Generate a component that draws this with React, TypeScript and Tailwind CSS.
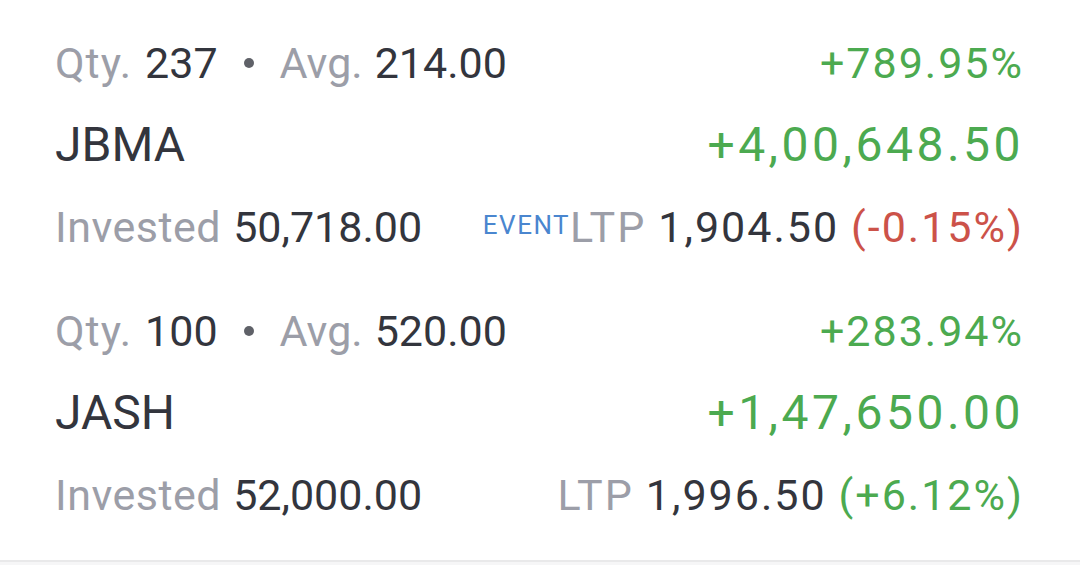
import React from "react";

type Holding = {
  qty: number;
  avg: string;
  symbol: string;
  pnl: string;
  pnlPct: string;
  invested: string;
  ltp: string;
  change: string;
  up: boolean;
  event?: boolean;
};

const holdings: Holding[] = [
  {
    qty: 237,
    avg: "214.00",
    symbol: "JBMA",
    pnl: "+4,00,648.50",
    pnlPct: "+789.95%",
    invested: "50,718.00",
    ltp: "1,904.50",
    change: "(-0.15%)",
    up: false,
    event: true,
  },
  {
    qty: 100,
    avg: "520.00",
    symbol: "JASH",
    pnl: "+1,47,650.00",
    pnlPct: "+283.94%",
    invested: "52,000.00",
    ltp: "1,996.50",
    change: "(+6.12%)",
    up: true,
  },
];

function HoldingRow({ h }: { h: Holding }) {
  return (
    <div className="flex flex-col">
      <div className="flex h-[82px] items-center justify-between text-[43px]">
        <div className="flex items-center">
          <span className="tracking-[1px] text-[#9c9ea8]">Qty.</span>
          <span className="ml-[13px] text-[#33353d]">{h.qty}</span>
          <span className="mx-[26px] h-[10px] w-[10px] rounded-full bg-[#5f6168]" />
          <span className="text-[#9c9ea8]">Avg.</span>
          <span className="ml-[12px] text-[#33353d]">{h.avg}</span>
        </div>
        <span className="tracking-[2px] text-[#4caa50]">{h.pnlPct}</span>
      </div>
      <div className="flex h-[82px] items-center justify-between text-[48px]">
        <span className="text-[#33353d]">{h.symbol}</span>
        <span className="tracking-[3.5px] text-[#4caa50]">{h.pnl}</span>
      </div>
      <div className="flex h-[82px] items-center justify-between text-[43px]">
        <div className="flex items-center">
          <span className="tracking-[0.5px] text-[#9c9ea8]">Invested</span>
          <span className="ml-[12px] text-[#33353d]">{h.invested}</span>
        </div>
        <div className="flex items-center tracking-[2px]">
          {h.event && (
            <span className="mb-[5px] text-[26px] tracking-[1.5px] text-[#4a86cf]">
              EVENT
            </span>
          )}
          <span className="text-[#9c9ea8]">LTP</span>
          <span className="ml-[12px] text-[#33353d]">{h.ltp}</span>
          <span
            className={
              "ml-[12px] " + (h.up ? "text-[#4caa50]" : "text-[#cc5249]")
            }
          >
            {h.change}
          </span>
        </div>
      </div>
    </div>
  );
}

export default function App() {
  return (
    <div className="h-[565px] w-[1080px] overflow-hidden bg-white font-['Roboto',sans-serif] leading-none">
      <div className="flex flex-col gap-[22px] border-b-2 border-[#e9e9ea] pl-[55px] pr-[56px] pt-[22px] pb-[24px]">
        {holdings.map((h) => (
          <HoldingRow key={h.symbol} h={h} />
        ))}
      </div>
      <div className="h-[10px] bg-[#f6f6f7]" />
    </div>
  );
}
